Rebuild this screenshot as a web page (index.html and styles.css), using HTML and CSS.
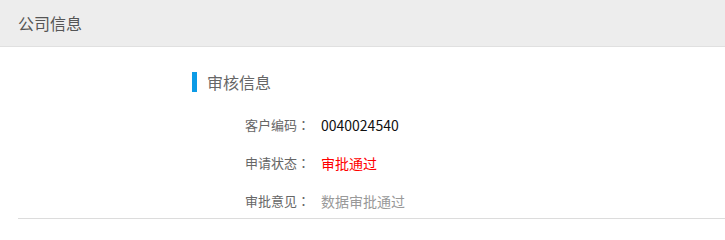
FILE: index.html
```html
<!DOCTYPE html>
<html lang="zh-CN">
<head>
<meta charset="utf-8">
<link rel="stylesheet" href="styles.css">
</head>
<body>
<div class="header">公司信息</div>
<div class="panel">
  <div class="section-title"><span class="bar"></span><span class="title-text">审核信息</span></div>
  <div class="rows">
    <div class="label">客户编码<span class="colon" lang="zh-TW">：</span></div><div class="value code">0040024540</div>
    <div class="label">申请状态<span class="colon" lang="zh-TW">：</span></div><div class="value status">审批通过</div>
    <div class="label">审批意见<span class="colon" lang="zh-TW">：</span></div><div class="value opinion">数据审批通过</div>
  </div>
</div>
</body>
</html>
```
FILE: styles.css
```css
html, body {
  margin: 0;
  padding: 0;
  background: #fff;
  font-family: "Noto Sans CJK SC", "Noto Sans", sans-serif;
}
.header {
  height: 46px;
  line-height: 46px;
  background: #ededed;
  border-bottom: 1px solid #e0e0e0;
  padding-left: 18px;
  font-size: 16px;
  color: #555;
}
.panel {
  margin-left: 18px;
  padding-top: 25px;
  padding-bottom: 7px;
  border-bottom: 1px solid #dcdcdc;
}
.section-title {
  display: flex;
  align-items: center;
  height: 20px;
  padding-left: 174px;
}
.bar {
  width: 5px;
  height: 20px;
  background: #0c9be6;
}
.title-text {
  margin-left: 10px;
  font-size: 16px;
  color: #666;
  line-height: 20px;
}
.rows {
  display: grid;
  grid-template-columns: 118px 1fr;
  column-gap: 11px;
  row-gap: 18px;
  padding-left: 174px;
  margin-top: 23px;
}
.label {
  text-align: right;
  font-size: 13px;
  line-height: 20px;
  color: #666;
}
.colon {
  font-family: "Noto Sans CJK TC", "Noto Sans CJK SC", sans-serif;
}
.value {
  font-size: 14px;
  line-height: 20px;
}
.code { color: #111; }
.status { color: #f00; }
.opinion { color: #999; }
```
